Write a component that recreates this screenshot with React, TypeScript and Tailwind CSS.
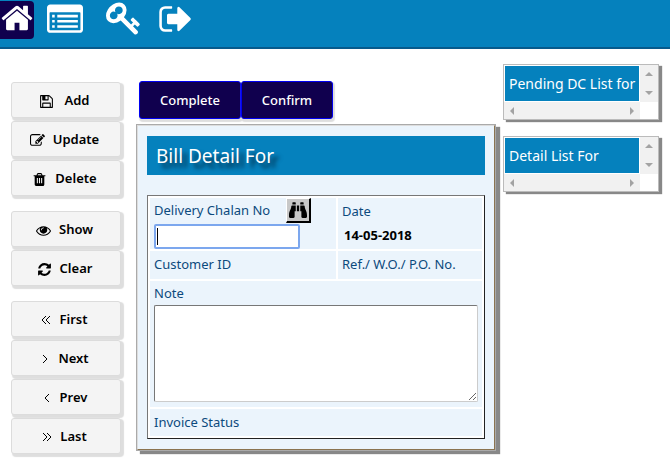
import type { ReactNode } from 'react';
import { FaBinoculars } from 'react-icons/fa';

const paths = {
  home: 'M1472 992v480q0 26-19 45t-45 19h-384v-384h-256v384h-384q-26 0-45-19t-19-45v-480q0-1 .5-3t.5-3l575-474 575 474q1 2 1 6zm223-69l-62 74q-8 9-21 11h-3q-13 0-21-7l-692-577-692 577q-12 8-24 7-13-2-21-11l-62-74q-8-10-7-23.5t11-21.5l719-599q32-26 76-26t76 26l244 204v-195q0-14 9-23t23-9h192q14 0 23 9t9 23v408l219 182q10 8 11 21.5t-7 23.5z',
  list: 'M256 640h128v128h-128zM256 896h128v128h-128zM256 1152h128v128h-128zM512 640h1024v128h-1024zM512 896h1024v128h-1024zM512 1152h1024v128h-1024zM1664 1376v-832q0-13-9.5-22.5t-22.5-9.5h-1472q-13 0-22.5 9.5t-9.5 22.5v832q0 13 9.5 22.5t22.5 9.5h1472q13 0 22.5-9.5t9.5-22.5zm128-1088v1088q0 66-47 113t-113 47h-1472q-66 0-113-47t-47-113v-1088q0-66 47-113t113-47h1472q66 0 113 47t47 113z',
  key: 'M832 512q0-80-56-136t-136-56-136 56-56 136q0 42 19 83-41-19-83-19-80 0-136 56t-56 136 56 136 136 56 136-56 56-136q0-42-19-83 41 19 83 19 80 0 136-56t56-136zm851 704q0 17-49 66t-66 49q-9 0-28.5-16t-36.5-33-38.5-40-24.5-26l-96 96 220 220q28 28 28 68 0 42-39 81t-81 39q-40 0-68-28l-671-671q-176 131-365 131-163 0-265.5-102.5t-102.5-265.5q0-160 95-313t248-248 313-95q163 0 265.5 102.5t102.5 265.5q0 189-131 365l355 355 96-96q-3-3-26-24.5t-40-38.5-33-36.5-16-28.5q0-17 49-66t66-49q13 0 23 10 6 6 46 44.5t82 79.5 86.5 86 73 78 28.5 41z',
  signOut: 'M704 1440q0 4 1 20t.5 26.5-3 23.5-10 19.5-20.5 6.5h-320q-119 0-203.5-84.5t-84.5-203.5v-704q0-119 84.5-203.5t203.5-84.5h320q13 0 22.5 9.5t9.5 22.5q0 4 1 20t.5 26.5-3 23.5-10 19.5-20.5 6.5h-320q-66 0-113 47t-47 113v704q0 66 47 113t113 47h312l11.5 1 11.5 3 8 5.5 7 9 2 13.5zm928-544q0 26-19 45l-544 544q-19 19-45 19t-45-19-19-45v-288h-448q-26 0-45-19t-19-45v-384q0-26 19-45t45-19h448v-288q0-26 19-45t45-19 45 19l544 544q19 19 19 45z',
  save: 'M512 1536h768v-384h-768v384zm896 0h128v-896q0-14-10-38.5t-20-34.5l-281-281q-10-10-34-20t-39-10v416q0 40-28 68t-68 28h-576q-40 0-68-28t-28-68v-416h-128v1280h128v-416q0-40 28-68t68-28h832q40 0 68 28t28 68v416zm-384-928v-320q0-13-9.5-22.5t-22.5-9.5h-192q-13 0-22.5 9.5t-9.5 22.5v320q0 13 9.5 22.5t22.5 9.5h192q13 0 22.5-9.5t9.5-22.5zm640 32v928q0 40-28 68t-68 28h-1344q-40 0-68-28t-28-68v-1344q0-40 28-68t68-28h928q40 0 88 20t76 48l280 280q28 28 48 76t20 88z',
  edit: 'M888 1184l116-116-152-152-116 116v56h96v96h56zm440-720q-16-16-33 1l-350 350q-17 17-1 33t33-1l350-350q17-17 1-33zm80 594v190q0 119-84.5 203.5t-203.5 84.5h-832q-119 0-203.5-84.5t-84.5-203.5v-832q0-119 84.5-203.5t203.5-84.5h832q63 0 117 25 15 7 18 23 3 17-9 29l-49 49q-14 14-32 8-23-6-45-6h-832q-66 0-113 47t-47 113v832q0 66 47 113t113 47h832q66 0 113-47t47-113v-126q0-13 9-22l64-64q15-15 35-7t20 29zm-96-738l288 288-672 672h-288v-288zm444 132l-92 92-288-288 92-92q28-28 68-28t68 28l152 152q28 28 28 68t-28 68z',
  trash: 'M576 704h128v640h-128zM832 704h128v640h-128zM1088 704h128v640h-128zM672 384h448l-48-117q-7-9-17-11h-317q-10 2-17 11zm928 32v64q0 14-9 23t-23 9h-96v948q0 83-47 143.5t-113 60.5h-832q-66 0-113-58.5t-47-141.5v-952h-96q-14 0-23-9t-9-23v-64q0-14 9-23t23-9h309l70-167q15-37 54-63t79-26h320q40 0 79 26t54 63l70 167h309q14 0 23 9t9 23z',
  eye: 'M1664 960q-152-236-381-353 61 104 61 225 0 185-131.5 316.5t-316.5 131.5-316.5-131.5-131.5-316.5q0-121 61-225-229 117-381 353 133 205 333.5 326.5t434.5 121.5 434.5-121.5 333.5-326.5zm-720-384q0-20-14-34t-34-14q-125 0-214.5 89.5t-89.5 214.5q0 20 14 34t34 14 34-14 14-34q0-86 61-147t147-61q20 0 34-14t14-34zm848 384q0 34-20 69-140 230-376.5 368.5t-499.5 138.5-499.5-139-376.5-368q-20-35-20-69t20-69q140-229 376.5-368t499.5-139 499.5 139 376.5 368q20 35 20 69z',
  refresh: 'M1639 1056q0 5-1 7-64 268-268 434.5t-478 166.5q-146 0-282.5-55t-243.5-157l-129 129q-19 19-45 19t-45-19-19-45v-448q0-26 19-45t45-19h448q26 0 45 19t19 45-19 45l-137 137q71 66 161 102t187 36q134 0 250-65t186-179q11-17 53-117 8-23 30-23h192q13 0 22.5 9.5t9.5 22.5zm25-800v448q0 26-19 45t-45 19h-448q-26 0-45-19t-19-45 19-45l138-138q-148-137-349-137-134 0-250 65t-186 179q-11 17-53 117-8 23-30 23h-199q-13 0-22.5-9.5t-9.5-22.5v-7q65-268 270-434.5t480-166.5q146 0 284 55.5t245 156.5l130-129q19-19 45-19t45 19 19 45z',
};

function Icon({ name, className }: { name: keyof typeof paths; className: string }) {
  return (
    <svg viewBox="0 0 1792 1792" fill="currentColor" fillRule="evenodd" className={className} aria-hidden="true">
      <path d={paths[name]} />
    </svg>
  );
}

function Angle({ d }: { d: string }) {
  return (
    <svg viewBox="0 0 10 10" fill="none" stroke="currentColor" strokeWidth="1" className="size-[10px]" aria-hidden="true">
      <path d={d} />
    </svg>
  );
}

function SideButton({ icon, children }: { icon: ReactNode; children: ReactNode }) {
  return (
    <button
      type="button"
      className="flex h-9 w-full items-center justify-center gap-2 rounded-[3px] border border-[#dcdcdc] bg-[#f4f4f4] pt-[2px] pr-[3px] text-[13px] font-semibold text-black shadow-[2px_2px_1px_1px_#dedede]"
    >
      {icon}
      {children}
    </button>
  );
}

function ListPanel({ title }: { title: string }) {
  return (
    <section className="grid h-[54px] w-[154px] grid-cols-[1fr_18px] grid-rows-[37px_1fr] bg-white shadow-[0_0_0_1px_#bbb,3px_2px_1px_1px_#888]">
      <h2 className="m-px overflow-hidden bg-[#0581bd] px-1 text-[14px] leading-[35px] whitespace-nowrap text-white">{title}</h2>
      <div className="flex flex-col items-center justify-between bg-[#f1f1f1] py-[7px] text-[#a3a3a3]">
        <svg viewBox="0 0 8 4" className="h-1 w-2" fill="currentColor"><path d="M0 4L4 0L8 4z" /></svg>
        <svg viewBox="0 0 8 4" className="h-1 w-2" fill="currentColor"><path d="M0 0L4 4L8 0z" /></svg>
      </div>
      <div className="flex items-center justify-between bg-[#f1f1f1] px-[6px] text-[#a3a3a3]">
        <svg viewBox="0 0 4 8" className="h-2 w-1" fill="currentColor"><path d="M4 0L0 4L4 8z" /></svg>
        <svg viewBox="0 0 4 8" className="h-2 w-1" fill="currentColor"><path d="M0 0L4 4L0 8z" /></svg>
      </div>
    </section>
  );
}

export default function App() {
  return (
    <div className="min-h-screen bg-white font-['Noto_Sans','Open_Sans',sans-serif] text-[13px] text-[#0c4a7d]">
      <nav className="flex h-[49px] items-start border-b-2 border-[#075a8c] bg-[#0581bd] text-white">
        <a href="#home" aria-label="Home" className="mt-px flex h-[38px] w-[34px] justify-center rounded-r-[4px] bg-[#10004e]">
          <Icon name="home" className="size-[34px] shrink-0" />
        </a>
        <a href="#list" aria-label="List" className="mt-[2px] ml-[13px]">
          <Icon name="list" className="size-9" />
        </a>
        <a href="#key" aria-label="Password" className="ml-[23px]">
          <Icon name="key" className="size-9" />
        </a>
        <a href="#logout" aria-label="Log out" className="mt-px ml-4">
          <Icon name="signOut" className="size-9" />
        </a>
      </nav>
      <div className="flex items-start">
        <aside className="mt-[33px] ml-[11px] flex w-[110px] shrink-0 flex-col gap-[15px]">
          <div className="flex flex-col gap-[3px]">
            <SideButton icon={<Icon name="save" className="mr-[2px] size-[15px]" />}>Add</SideButton>
            <SideButton icon={<Icon name="edit" className="size-[15px]" />}>Update</SideButton>
            <SideButton icon={<Icon name="trash" className="size-[15px]" />}>Delete</SideButton>
          </div>
          <div className="flex flex-col gap-[3px]">
            <SideButton icon={<Icon name="eye" className="size-[15px]" />}>Show</SideButton>
            <SideButton icon={<Icon name="refresh" className="size-[15px]" />}>Clear</SideButton>
          </div>
          <div className="flex flex-col gap-[3px]">
            <SideButton icon={<Angle d="M5 1L1 5L5 9M9 1L5 5L9 9" />}>First</SideButton>
            <SideButton icon={<Angle d="M3 1L7 5L3 9" />}>Next</SideButton>
            <SideButton icon={<Angle d="M7 1L3 5L7 9" />}>Prev</SideButton>
            <SideButton icon={<Angle d="M1 1L5 5L1 9M5 1L9 5L5 9" />}>Last</SideButton>
          </div>
        </aside>
        <main className="mt-8 ml-4 w-[358px] shrink-0">
          <div className="ml-[2px] flex">
            <button type="button" className="h-[38px] w-[102px] rounded-[3px] border border-[#0000f0] bg-[#10004e] pt-[2px] text-[13px] font-medium text-white shadow-[1px_2px_1px_1px_#dedede]">Complete</button>
            <button type="button" className="h-[38px] w-[92px] rounded-[3px] border border-[#0000f0] bg-[#10004e] pt-[2px] text-[13px] font-medium text-white shadow-[1px_2px_1px_1px_#dedede]">Confirm</button>
          </div>
          <form className="mt-[6px] border border-[#8a7350] border-t-[#ddd] border-l-[#ddd] bg-[#ebf4fc] px-[9px] py-[10px] shadow-[0_0_0_1px_#aaa,4px_3px_1px_1px_#888]">
            <h1 className="h-[39px] bg-[#0581bd] px-[9px] text-[19px] leading-[40px] text-white [text-shadow:5px_5px_4px_#002a44]">Bill Detail For</h1>
            <table className="mt-5 w-full table-fixed border-separate border-spacing-[2px] border border-t-[#777] border-r-[#222] border-b-[#222] border-l-[#777] bg-white [&_td]:bg-[#ebf4fc] [&_td]:px-1">
              <colgroup>
                <col className="w-[186px]" />
                <col />
              </colgroup>
              <tbody>
                <tr>
                  <td className="h-[51px] align-top">
                    <div className="flex h-[25px] items-center gap-4">
                      <label htmlFor="chalan">Delivery Chalan No</label>
                      <button type="button" aria-label="Find" className="flex size-[25px] items-center justify-center border-t border-r-2 border-b-2 border-l border-t-white border-r-black border-b-black border-l-white bg-[#c8c8c8] text-black">
                        <FaBinoculars className="size-[18px]" />
                      </button>
                    </div>
                    <div className="relative mt-px w-[146px]">
                      <input id="chalan" type="text" autoFocus className="block h-[25px] w-full rounded-[2px] border-2 border-[#7ca7ee] bg-white px-px text-black caret-transparent outline-none" />
                      <span className="pointer-events-none absolute top-1 left-[3px] h-[17px] w-px bg-black" />
                    </div>
                  </td>
                  <td className="h-[51px] align-top">
                    <div className="leading-[26px]">Date</div>
                    <div className="pl-[2px] leading-[22px] font-bold text-black">14-05-2018</div>
                  </td>
                </tr>
                <tr>
                  <td className="h-7">Customer ID</td>
                  <td className="h-7">Ref./ W.O./ P.O. No.</td>
                </tr>
                <tr>
                  <td colSpan={2} className="h-[126px] align-top">
                    <label htmlFor="note" className="block leading-6">Note</label>
                    <textarea id="note" className="block h-[97px] w-full resize rounded-[2px] border border-[#ccc] border-t-[#777] border-l-[#777] bg-white text-black" />
                  </td>
                </tr>
                <tr>
                  <td colSpan={2} className="h-[27px]">Invoice Status</td>
                </tr>
              </tbody>
            </table>
          </form>
        </main>
        <aside className="mt-4 ml-[9px] flex shrink-0 flex-col gap-[18px]">
          <ListPanel title="Pending DC List for" />
          <ListPanel title="Detail List For" />
        </aside>
      </div>
    </div>
  );
}
